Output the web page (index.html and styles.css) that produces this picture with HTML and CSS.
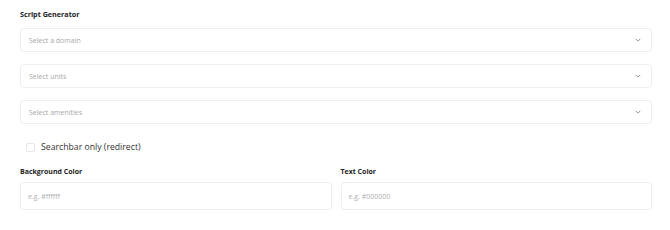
FILE: index.html
```html
<!DOCTYPE html>
<html lang="en">
<head>
    <meta charset="UTF-8">
    <meta name="viewport" content="width=device-width, initial-scale=1.0">
    <title>Script Generator</title>
    <link rel="stylesheet" href="styles.css">
</head>
<body>
    <div class="panel">
        <div class="title">Script Generator</div>
        <div class="select">
            <span>Select a domain</span>
            <svg class="chevron" viewBox="0 0 8 5"><path d="M1 1l3 3 3-3"/></svg>
        </div>
        <div class="select">
            <span>Select units</span>
            <svg class="chevron" viewBox="0 0 8 5"><path d="M1 1l3 3 3-3"/></svg>
        </div>
        <div class="select">
            <span>Select amenities</span>
            <svg class="chevron" viewBox="0 0 8 5"><path d="M1 1l3 3 3-3"/></svg>
        </div>
        <label class="check-row">
            <span class="checkbox"></span>
            <span>Searchbar only (redirect)</span>
        </label>
        <div class="colors">
            <div class="field">
                <div class="label">Background Color</div>
                <input class="input" type="text" placeholder="e.g. #ffffff">
            </div>
            <div class="field">
                <div class="label">Text Color</div>
                <input class="input" type="text" placeholder="e.g. #000000">
            </div>
        </div>
    </div>
</body>
</html>
```

FILE: styles.css
```css
body {
    margin: 0;
    background-color: #fff;
    font-family: "Open Sans", Arial, sans-serif;
    color: #222;
}
.panel {
    display: flex;
    flex-direction: column;
    padding: 9px 18px 0 20px;
}
.title {
    font-size: 7.2px;
    font-weight: 700;
    line-height: 10px;
    margin-bottom: 9px;
}
.select {
    display: flex;
    align-items: center;
    justify-content: space-between;
    height: 24px;
    box-sizing: border-box;
    border: 1px solid #eeeeee;
    border-radius: 4px;
    padding: 0 10px 0 8px;
    margin-bottom: 12px;
    font-size: 7px;
    color: #a8a8a8;
}
.chevron {
    width: 6px;
    height: 4px;
    fill: none;
    stroke: #888;
    stroke-width: 1.2;
}
.check-row {
    display: flex;
    align-items: center;
    gap: 6px;
    padding-left: 6px;
    margin-top: 5px;
    font-size: 8.7px;
    color: #333;
}
.checkbox {
    width: 9px;
    height: 9px;
    box-sizing: border-box;
    border: 1px solid #e6e6e6;
    border-radius: 2px;
}
.colors {
    display: grid;
    grid-template-columns: 1fr 1fr;
    gap: 9px;
    margin-top: 14px;
}
.label {
    font-size: 7px;
    font-weight: 700;
    line-height: 10px;
    margin-bottom: 5px;
}
.input {
    display: block;
    width: 100%;
    height: 28px;
    box-sizing: border-box;
    border: 1px solid #eeeeee;
    border-radius: 4px;
    padding: 0 7px;
    font-family: "Open Sans", Arial, sans-serif;
    font-size: 7px;
    outline: none;
}
.input::placeholder {
    color: #b0b0b0;
}
```
